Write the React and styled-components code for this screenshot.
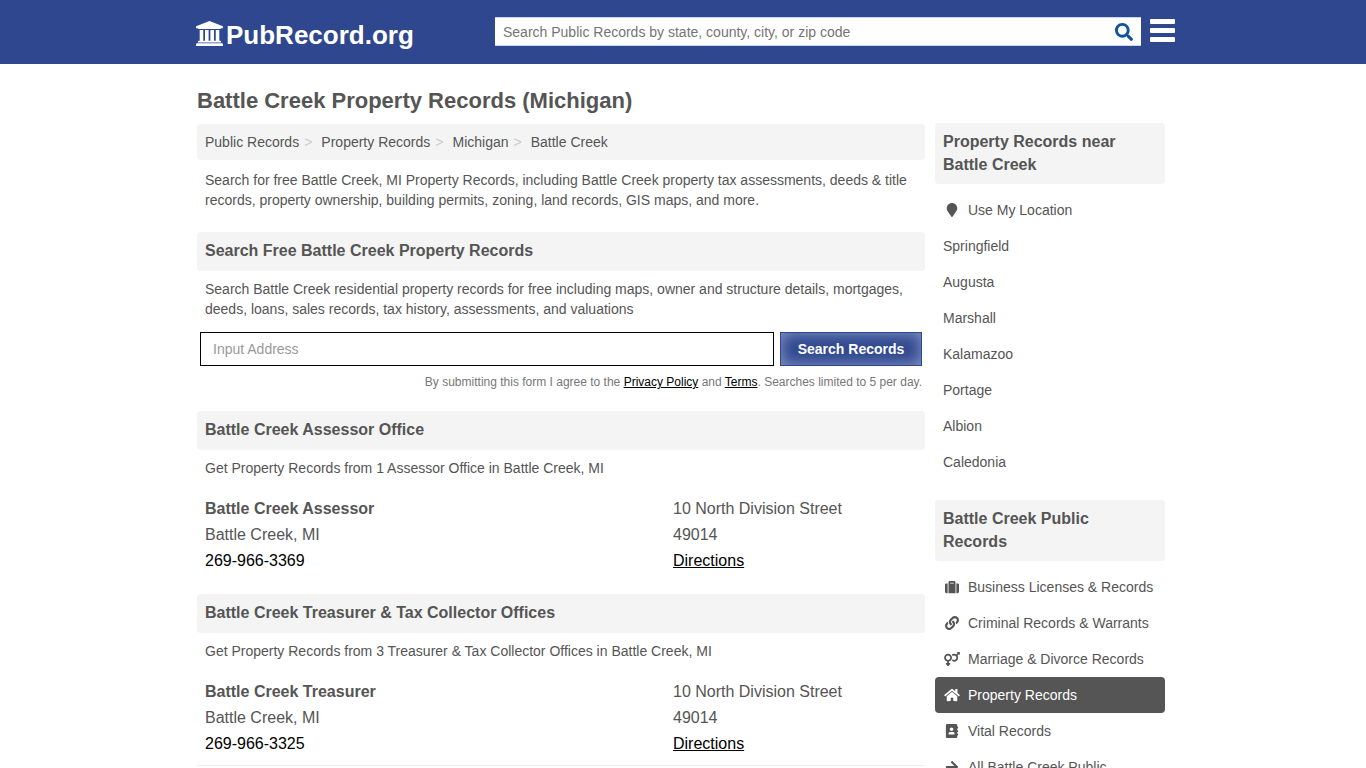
import React from "react";
import styled, { createGlobalStyle } from "styled-components";
import {
    FaSearch,
    FaMapMarker,
    FaSuitcase,
    FaLink,
    FaVenusMars,
    FaHome,
    FaAddressBook,
    FaArrowRight,
} from "react-icons/fa";

const crumbs = ["Public Records", "Property Records", "Michigan", "Battle Creek"];

const nearby = ["Springfield", "Augusta", "Marshall", "Kalamazoo", "Portage", "Albion", "Caledonia"];

const categories = [
    { label: "Business Licenses & Records", icon: FaSuitcase },
    { label: "Criminal Records & Warrants", icon: FaLink },
    { label: "Marriage & Divorce Records", icon: FaVenusMars },
    { label: "Property Records", icon: FaHome, active: true },
    { label: "Vital Records", icon: FaAddressBook },
    { label: "All Battle Creek Public Records", icon: FaArrowRight },
];

const offices = [
    {
        title: "Battle Creek Assessor Office",
        intro: "Get Property Records from 1 Assessor Office in Battle Creek, MI",
        name: "Battle Creek Assessor",
        phone: "269-966-3369",
    },
    {
        title: "Battle Creek Treasurer & Tax Collector Offices",
        intro: "Get Property Records from 3 Treasurer & Tax Collector Offices in Battle Creek, MI",
        name: "Battle Creek Treasurer",
        phone: "269-966-3325",
    },
];

const Courthouse = () => (
    <svg viewBox="0 0 1920 1792" fill="currentColor" aria-hidden="true">
        <path d="M960 0l960 384v128h-128q0 26-20.5 45t-48.5 19h-1526q-28 0-48.5-19t-20.5-45h-128v-128zM256 640h256v768h128v-768h256v768h128v-768h256v768h128v-768h256v768h59q28 0 48.5 19t20.5 45v64h-1664v-64q0-26 20.5-45t48.5-19h59v-768zM1851 1600q28 0 48.5 19t20.5 45v128h-1920v-128q0-26 20.5-45t48.5-19h1782z" />
    </svg>
);

const Header = () => (
    <TopBar>
        <TopInner>
            <Logo href="#">
                <Courthouse />
                PubRecord.org
            </Logo>
            <SiteSearch role="search" onSubmit={(e) => e.preventDefault()}>
                <input
                    type="text"
                    aria-label="Search Public Records"
                    placeholder="Search Public Records by state, county, city, or zip code"
                />
                <button type="submit" aria-label="Search">
                    <FaSearch />
                </button>
            </SiteSearch>
            <MenuButton type="button" aria-label="Menu">
                <span />
                <span />
                <span />
            </MenuButton>
        </TopInner>
    </TopBar>
);

const AddressForm = () => (
    <Form onSubmit={(e) => e.preventDefault()}>
        <FormRow>
            <AddressInput type="text" aria-label="Address" placeholder="Input Address" />
            <SubmitButton type="submit">Search Records</SubmitButton>
        </FormRow>
        <Terms>
            By submitting this form I agree to the <a href="#">Privacy Policy</a> and{" "}
            <a href="#">Terms</a>. Searches limited to 5 per day.
        </Terms>
    </Form>
);

const Office = ({ office }) => (
    <Section>
        <SectionTitle>{office.title}</SectionTitle>
        <Text>{office.intro}</Text>
        <Record>
            <div>
                <h3>{office.name}</h3>
                <p>Battle Creek, MI</p>
                <Phone href={`tel:${office.phone}`}>{office.phone}</Phone>
            </div>
            <div>
                <p>10 North Division Street</p>
                <p>49014</p>
                <Directions href="#">Directions</Directions>
            </div>
        </Record>
    </Section>
);

const SideLink = ({ label, icon: Icon, active }) => (
    <li>
        <SideAnchor href="#" $active={active}>
            {Icon && (
                <IconBox>
                    <Icon />
                </IconBox>
            )}
            <span>{label}</span>
        </SideAnchor>
    </li>
);

const App = () => (
    <>
        <GlobalStyle />
        <Header />
        <Page>
            <Main>
                <PageTitle>Battle Creek Property Records (Michigan)</PageTitle>
                <Breadcrumb aria-label="Breadcrumb">
                    <ol>
                        {crumbs.map((c) => (
                            <li key={c}>
                                <a href="#">{c}</a>
                            </li>
                        ))}
                    </ol>
                </Breadcrumb>
                <Intro>
                    Search for free Battle Creek, MI Property Records, including Battle Creek property tax
                    assessments, deeds &amp; title records, property ownership, building permits, zoning, land
                    records, GIS maps, and more.
                </Intro>
                <Section>
                    <SectionTitle>Search Free Battle Creek Property Records</SectionTitle>
                    <Text>
                        Search Battle Creek residential property records for free including maps, owner and
                        structure details, mortgages, deeds, loans, sales records, tax history, assessments, and
                        valuations
                    </Text>
                    <AddressForm />
                </Section>
                {offices.map((o) => (
                    <Office key={o.name} office={o} />
                ))}
            </Main>
            <Sidebar>
                <SideTitle>Property Records near Battle Creek</SideTitle>
                <SideList>
                    <SideLink label="Use My Location" icon={FaMapMarker} />
                    {nearby.map((n) => (
                        <SideLink key={n} label={n} />
                    ))}
                </SideList>
                <SideTitle>Battle Creek Public Records</SideTitle>
                <SideList>
                    {categories.map((c) => (
                        <SideLink key={c.label} {...c} />
                    ))}
                </SideList>
            </Sidebar>
        </Page>
    </>
);

export default App;

const GlobalStyle = createGlobalStyle`
    *{
        box-sizing: border-box;
    }
    html{
        scrollbar-width: none;
    }
    body{
        margin: 0;
        background: #fff;
        color: #555;
        font-family: "Liberation Sans", Arial, sans-serif;
        font-size: 14px;
        line-height: 20px;
    }
    h1, h2, h3, p, ul, ol{
        margin: 0;
        padding: 0;
    }
    ul, ol{
        list-style: none;
    }
    a{
        color: inherit;
        text-decoration: none;
    }
    button, input{
        font-family: inherit;
        font-size: 14px;
    }
`;

const TopBar = styled.header`
    background: #2f478e;
`;

const TopInner = styled.div`
    display: flex;
    align-items: flex-start;
    max-width: 984px;
    height: 64px;
    margin: 0 auto;
    padding: 17px 0 0 4px;
`;

const Logo = styled.a`
    display: flex;
    align-items: center;
    gap: 3px;
    flex: 0 0 300px;
    padding-left: 1px;
    color: #fff;
    font-size: 26px;
    font-weight: bold;
    line-height: 36px;
    svg{
        width: 27px;
        height: 25px;
        margin-bottom: 3px;
    }
`;

const SiteSearch = styled.form`
    display: flex;
    flex: 1;
    height: 29px;
    background: #fff;
    border: 1px solid #c5d5f5;
    border-width: 1px 0;
    input{
        flex: 1;
        min-width: 0;
        padding: 0 8px;
        border: none;
        outline: none;
        background: none;
    }
    input::placeholder{
        color: #757575;
    }
    button{
        display: flex;
        align-items: center;
        padding: 0 8px;
        border: none;
        background: none;
        color: #0f5499;
        font-size: 18px;
        cursor: pointer;
    }
`;

const MenuButton = styled.button`
    display: flex;
    flex-direction: column;
    gap: 4px;
    width: 25px;
    margin: 2px 0 0 9px;
    padding: 0;
    border: none;
    background: none;
    cursor: pointer;
    span{
        height: 5px;
        border-radius: 1px;
        background: #fff;
    }
`;

const Page = styled.div`
    display: flex;
    align-items: flex-start;
    gap: 10px;
    max-width: 980px;
    margin: 0 auto;
    padding: 23px 8px 0 4px;
`;

const Main = styled.main`
    flex: 1;
    min-width: 0;
`;

const PageTitle = styled.h1`
    margin-bottom: 9px;
    font-size: 22px;
    line-height: 28px;
`;

const Breadcrumb = styled.nav`
    padding: 8px;
    border-radius: 4px;
    background: #f4f4f4;
    ol{
        display: flex;
    }
    li + li::before{
        content: ">";
        padding: 0 9px 0 5px;
        color: #ccc;
    }
`;

const Text = styled.p`
    padding: 8px 8px 0;
`;

const Intro = styled(Text)`
    padding: 10px 8px 2px;
`;

const Section = styled.section`
    margin-top: 20px;
`;

const SectionTitle = styled.h2`
    padding: 7px 8px 8px;
    border-radius: 4px;
    background: #f4f4f4;
    font-size: 16px;
    line-height: 24px;
`;

const Form = styled.form`
    padding: 13px 3px 0;
`;

const FormRow = styled.div`
    display: flex;
    gap: 6px;
`;

const AddressInput = styled.input`
    flex: 1;
    min-width: 0;
    height: 34px;
    padding: 0 12px;
    border: 1px solid #000;
    &::placeholder{
        color: #999;
    }
`;

const SubmitButton = styled.button`
    width: 142px;
    height: 34px;
    padding: 0;
    border: 1px solid #2f478e;
    background: #2f478e;
    box-shadow: inset 0 0 16px #8c9bca;
    color: #fff;
    font-weight: bold;
    cursor: pointer;
`;

const Terms = styled.p`
    padding-top: 7px;
    color: #777;
    font-size: 12px;
    line-height: 18px;
    text-align: right;
    a{
        color: #000;
        text-decoration: underline;
    }
`;

const Record = styled.div`
    display: grid;
    grid-template-columns: 1fr 244px;
    padding: 18px 8px 8px;
    border-bottom: 1px solid #eee;
    font-size: 16px;
    line-height: 26px;
    h3{
        font-size: 16px;
    }
    ${Section}:not(:last-child) > &{
        padding-bottom: 0;
        border-bottom: none;
    }
`;

const Phone = styled.a`
    color: #000;
`;

const Directions = styled(Phone)`
    text-decoration: underline;
`;

const Sidebar = styled.aside`
    flex: 0 0 230px;
    padding-top: 36px;
`;

const SideTitle = styled.h2`
    padding: 7px 8px 8px;
    border-radius: 4px;
    background: #f4f4f4;
    font-size: 16px;
    line-height: 23px;
`;

const SideList = styled.ul`
    padding: 8px 0 20px;
`;

const SideAnchor = styled.a`
    display: flex;
    gap: 7px;
    padding: 8px;
    border-radius: 4px;
    background: ${(props) => (props.$active ? "#555" : "none")};
    color: ${(props) => (props.$active ? "#fff" : "inherit")};
`;

const IconBox = styled.span`
    display: flex;
    flex: 0 0 18px;
    align-items: center;
    justify-content: center;
    height: 20px;
    svg{
        width: 16px;
        height: 14px;
    }
`;
